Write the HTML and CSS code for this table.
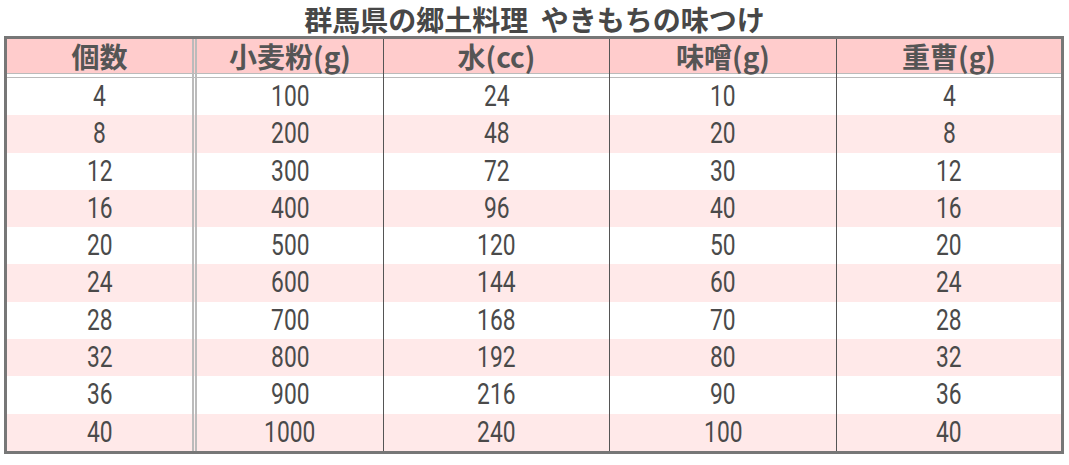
FILE: index.html
```html
<!DOCTYPE html>
<html lang="ja">
<head>
<meta charset="utf-8">
<title>やきもちの味つけ</title>
<link rel="stylesheet" href="styles.css">
</head>
<body>
<div class="title">群馬県の郷土料理 やきもちの味つけ</div>
<table class="recipe">
  <thead>
    <tr>
      <th class="c1">個数</th>
      <th class="c2">小麦粉(g)</th>
      <th class="c3">水(cc)</th>
      <th class="c4">味噌(g)</th>
      <th class="c5">重曹(g)</th>
    </tr>
  </thead>
  <tbody>
    <tr><td class="c1"><span class="n">4</span></td><td class="c2"><span class="n">100</span></td><td class="c3"><span class="n">24</span></td><td class="c4"><span class="n">10</span></td><td class="c5"><span class="n">4</span></td></tr>
    <tr class="alt"><td class="c1"><span class="n">8</span></td><td class="c2"><span class="n">200</span></td><td class="c3"><span class="n">48</span></td><td class="c4"><span class="n">20</span></td><td class="c5"><span class="n">8</span></td></tr>
    <tr><td class="c1"><span class="n">12</span></td><td class="c2"><span class="n">300</span></td><td class="c3"><span class="n">72</span></td><td class="c4"><span class="n">30</span></td><td class="c5"><span class="n">12</span></td></tr>
    <tr class="alt"><td class="c1"><span class="n">16</span></td><td class="c2"><span class="n">400</span></td><td class="c3"><span class="n">96</span></td><td class="c4"><span class="n">40</span></td><td class="c5"><span class="n">16</span></td></tr>
    <tr><td class="c1"><span class="n">20</span></td><td class="c2"><span class="n">500</span></td><td class="c3"><span class="n">120</span></td><td class="c4"><span class="n">50</span></td><td class="c5"><span class="n">20</span></td></tr>
    <tr class="alt"><td class="c1"><span class="n">24</span></td><td class="c2"><span class="n">600</span></td><td class="c3"><span class="n">144</span></td><td class="c4"><span class="n">60</span></td><td class="c5"><span class="n">24</span></td></tr>
    <tr><td class="c1"><span class="n">28</span></td><td class="c2"><span class="n">700</span></td><td class="c3"><span class="n">168</span></td><td class="c4"><span class="n">70</span></td><td class="c5"><span class="n">28</span></td></tr>
    <tr class="alt"><td class="c1"><span class="n">32</span></td><td class="c2"><span class="n">800</span></td><td class="c3"><span class="n">192</span></td><td class="c4"><span class="n">80</span></td><td class="c5"><span class="n">32</span></td></tr>
    <tr><td class="c1"><span class="n">36</span></td><td class="c2"><span class="n">900</span></td><td class="c3"><span class="n">216</span></td><td class="c4"><span class="n">90</span></td><td class="c5"><span class="n">36</span></td></tr>
    <tr class="alt"><td class="c1"><span class="n">40</span></td><td class="c2"><span class="n">1000</span></td><td class="c3"><span class="n">240</span></td><td class="c4"><span class="n">100</span></td><td class="c5"><span class="n">40</span></td></tr>
  </tbody>
</table>
</body>
</html>
```
FILE: styles.css
```css
html, body {
  margin: 0;
  padding: 0;
  background: #ffffff;
}

body {
  font-family: "Noto Sans CJK JP", "Noto Sans", sans-serif;
}

.title {
  box-sizing: border-box;
  height: 36px;
  padding-top: 2px;
  line-height: 34px;
  text-align: center;
  font-size: 28px;
  font-weight: 700;
  word-spacing: 6px;
  color: #474747;
  white-space: nowrap;
}

.recipe {
  margin-left: 4px;
  width: 1060px;
  table-layout: fixed;
  border-collapse: separate;
  border-spacing: 0;
  border: 3px solid #777777;
  background: #ffffff;
}

.recipe th,
.recipe td {
  box-sizing: border-box;
  padding: 0;
  text-align: center;
  white-space: nowrap;
}

.recipe th {
  padding-bottom: 5px;
  line-height: 34px;
  font-size: 28px;
  font-weight: 700;
  color: #555555;
  background: linear-gradient(to bottom,
    #ffcccc 0, #ffcccc 34px,
    #bbbbbb 34px, #bbbbbb 35px,
    #ffffff 35px, #ffffff 38px,
    #bbbbbb 38px, #bbbbbb 39px);
}

.recipe td {
  font-family: Roboto, "Liberation Sans", sans-serif;
  font-size: 30px;
  line-height: 36.3px;
  padding-bottom: 1px;
  color: #4a4a4a;
}

.recipe .alt td {
  background: #ffe9e9;
}

.c1 { width: 190px; border-right: 5px double #bbbbbb; }
.c2 { width: 187px; border-right: 1px solid #555555; }
.c3 { width: 226px; border-right: 1px solid #555555; }
.c4 { width: 227px; border-right: 1px solid #555555; }
.c5 { width: 224px; }

.n {
  display: inline-block;
  line-height: 36.3px;
  transform: scaleX(0.76);
}
```
